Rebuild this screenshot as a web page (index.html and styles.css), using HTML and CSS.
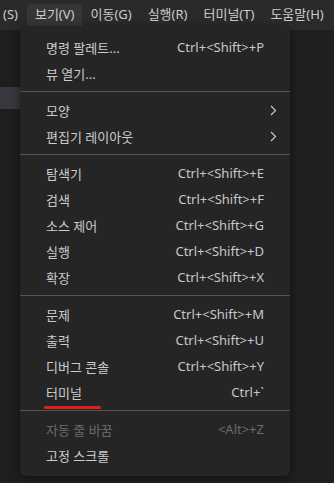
FILE: index.html
```html
<!DOCTYPE html>
<html lang="ko">
<head>
<meta charset="UTF-8">
<meta name="viewport" content="width=device-width, initial-scale=1.0">
<title>보기 메뉴</title>
<link rel="stylesheet" href="styles.css">
</head>
<body>
<div class="menubar">
  <div class="mb-item cut">(S)</div>
  <div class="mb-item active">보기(V)</div>
  <div class="mb-item">이동(G)</div>
  <div class="mb-item">실행(R)</div>
  <div class="mb-item">터미널(T)</div>
  <div class="mb-item">도움말(H)</div>
</div>
<div class="workspace">
  <div class="sidebar"><div class="sel-row"></div></div>
  <div class="editor"></div>
</div>

<!-- 보기 dropdown -->
<div class="dropdown">
  <div class="row"><span>명령 팔레트...</span><span class="keys">Ctrl+&lt;Shift&gt;+P</span></div>
  <div class="row"><span>뷰 열기...</span></div>
  <div class="sep"></div>
  <div class="row"><span>모양</span><svg class="chev" width="7" height="11" viewBox="0 0 7 11"><path d="M1 1l4.5 4.5L1 10" fill="none" stroke="#c8c8c8" stroke-width="1.2"/></svg></div>
  <div class="row"><span>편집기 레이아웃</span><svg class="chev" width="7" height="11" viewBox="0 0 7 11"><path d="M1 1l4.5 4.5L1 10" fill="none" stroke="#c8c8c8" stroke-width="1.2"/></svg></div>
  <div class="sep"></div>
  <div class="row"><span>탐색기</span><span class="keys">Ctrl+&lt;Shift&gt;+E</span></div>
  <div class="row"><span>검색</span><span class="keys">Ctrl+&lt;Shift&gt;+F</span></div>
  <div class="row"><span>소스 제어</span><span class="keys">Ctrl+&lt;Shift&gt;+G</span></div>
  <div class="row"><span>실행</span><span class="keys">Ctrl+&lt;Shift&gt;+D</span></div>
  <div class="row"><span>확장</span><span class="keys">Ctrl+&lt;Shift&gt;+X</span></div>
  <div class="sep"></div>
  <div class="row"><span>문제</span><span class="keys">Ctrl+&lt;Shift&gt;+M</span></div>
  <div class="row"><span>출력</span><span class="keys">Ctrl+&lt;Shift&gt;+U</span></div>
  <div class="row"><span>디버그 콘솔</span><span class="keys">Ctrl+&lt;Shift&gt;+Y</span></div>
  <div class="row"><span class="mark">터미널</span><span class="keys">Ctrl+`</span></div>
  <div class="sep"></div>
  <div class="row disabled"><span>자동 줄 바꿈</span><span class="keys">&lt;Alt&gt;+Z</span></div>
  <div class="row"><span>고정 스크롤</span></div>
</div>
</body>
</html>
```

FILE: styles.css
```css
body {
    margin: 0;
    width: 334px;
    height: 483px;
    overflow: hidden;
    background: #1f1f1f;
    font-family: "Segoe UI", "Noto Sans", "Noto Sans CJK KR", sans-serif;
    font-size: 13px;
    color: #cccccc;
    position: relative;
}
.menubar {
    height: 30px;
    background: #2a2a2a;
    display: flex;
    align-items: flex-start;
    padding-top: 4px;
    box-sizing: border-box;
    white-space: nowrap;
}
.mb-item {
    height: 22px;
    line-height: 21px;
    padding: 0 8px;
    border-radius: 4px;
}
.mb-item.cut {
    margin-left: -5px;
    padding-right: 9px;
}
.mb-item.active {
    background: #363636;
    border-radius: 4px 4px 0 0;
}
.workspace {
    display: flex;
    height: 453px;
}
.sidebar {
    width: 20px;
    background: #1e1e1e;
    padding-top: 57px;
}
.sel-row {
    height: 22px;
    background: #37373d;
}
.editor {
    flex: 1;
    background: #1f1f1f;
}
/* dropdown */
.dropdown {
    position: absolute;
    left: 20px;
    top: 26px;
    width: 270px;
    background: #252526;
    border-radius: 0 6px 6px 6px;
    box-shadow: 0 2px 8px rgba(0, 0, 0, 0.45);
    padding: 8px 0 8px;
}
.row {
    height: 26px;
    display: flex;
    align-items: center;
    justify-content: space-between;
    padding: 0 26px;
    position: relative;
}
.keys {
    color: #c8c8c8;
}
.chev {
    margin-right: -13px;
}
.sep {
    height: 1px;
    background: #545454;
    margin: 5px 0;
}
.disabled {
    color: #6b6b6b;
}
.disabled .keys {
    color: #6b6b6b;
}
.mark {
    position: relative;
}
.mark::after {
    content: "";
    position: absolute;
    left: -2px;
    width: 57px;
    bottom: -7px;
    height: 3px;
    border-radius: 2px;
    background: #e02020;
}
```
